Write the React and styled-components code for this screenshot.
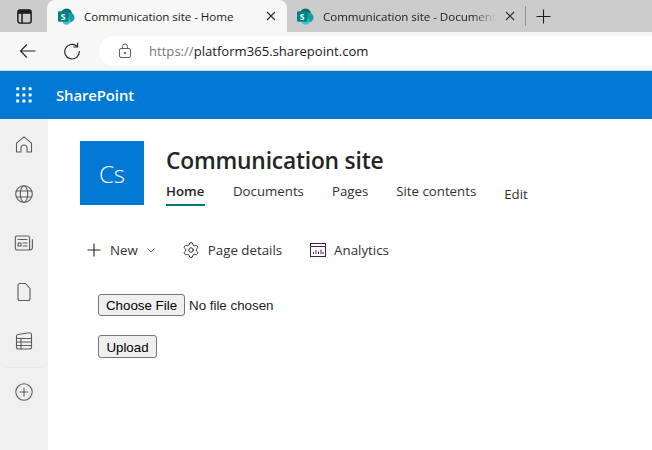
import React from "react";
import styled, { createGlobalStyle } from "styled-components";
import { Settings } from "lucide-react";

const Global = createGlobalStyle`
  html, body { margin: 0; padding: 0; background: #fff; }
  body { font-family: "Open Sans", "Noto Sans", "Liberation Sans", sans-serif; color: #242424; }
`;
const Page = styled.div`
  width: 652px; height: 450px; overflow: hidden; display: flex; flex-direction: column; background: #fff;
`;
const TabStrip = styled.div`
  height: 32px; flex: none; background: #cccccc; display: flex; align-items: stretch;
`;
const WindowBtn = styled.div`
  width: 47px; flex: none; display: flex; align-items: center; justify-content: center; padding-left: 2px; box-sizing: border-box;
`;
const Tab = styled.div`
  width: ${p => p.$w}px; flex: none; box-sizing: border-box; display: flex; align-items: center;
  padding: ${p => p.$pad}; gap: ${p => p.$gap}px;
  background: ${p => (p.$active ? "#f7f7f7" : "transparent")};
  border-radius: 8px 8px 0 0;
`;
const TabTitle = styled.span`
  flex: 1; min-width: 0; white-space: nowrap; overflow: hidden; font-size: 11.6px; letter-spacing: -0.05px; color: #1c1c1c;
  ${p => p.$fade && "-webkit-mask-image: linear-gradient(to right, #000 86%, transparent 100%);"}
`;
const Divider = styled.div`
  width: 1px; height: 20px; background: #8f8f8f; align-self: center; flex: none; margin: 0 10px 0 1px;
`;
const Toolbar = styled.div`
  height: 39px; flex: none; background: #f7f7f7; display: flex; align-items: center; padding-left: 19px; box-sizing: border-box; border-bottom: 1px solid #dcdcdc;
`;
const ToolIcon = styled.div`
  width: 18px; height: 18px; flex: none; margin-right: ${p => p.$mr}px; display: flex;
`;
const Address = styled.div`
  flex: 1; height: 30px; background: #fff; border-radius: 15px 0 0 15px; display: flex; align-items: center; padding-left: 19px; gap: 17px;
`;
const Url = styled.span`
  font-size: 13.1px; color: #1a1a1a; white-space: nowrap;
  & > i { font-style: normal; color: #767676; }
`;
const SuiteBar = styled.div`
  height: 48px; flex: none; background: #0078d4; display: flex; align-items: center; padding-left: 16px; gap: 24px; color: #fff;
`;
const Brand = styled.span`
  font-size: 14.9px; font-weight: 600; letter-spacing: -0.1px;
`;
const Body = styled.div`
  flex: 1; display: flex; min-height: 0;
`;
const Rail = styled.div`
  width: 48px; flex: none; background: #f0f0f0; display: flex; flex-direction: column; align-items: center; padding-top: 16px; box-sizing: border-box;
`;
const RailIcon = styled.div`
  width: 20px; height: 20px; display: flex; margin-bottom: 29px; color: #5c5c5c;
`;
const RailSep = styled.div`
  width: 38px; height: 1px; background: #e8e8e8; margin: -13px 0 14px;
`;
const Main = styled.div`
  flex: 1; min-width: 0; padding: 22px 0 0 32px;
`;
const SiteHeader = styled.div`
  display: flex; gap: 22px;
`;
const Logo = styled.div`
  width: 64px; height: 64px; background: #0078d4; color: #fff; display: flex; align-items: center; justify-content: center; font-size: 24px; font-weight: 300;
`;
const SiteInfo = styled.div`
  display: flex; flex-direction: column; padding-top: 5px;
`;
const Title = styled.div`
  font-size: 22.8px; font-weight: 600; line-height: 30px; letter-spacing: -0.2px; color: #242424;
`;
const Nav = styled.div`
  display: flex; gap: 28px; margin-top: 7px; align-items: flex-start;
`;
const NavItem = styled.div`
  font-size: 13.25px; line-height: 17px; padding-bottom: 4px; white-space: nowrap; color: #323130;
  font-weight: ${p => (p.$active ? 600 : 400)};
  ${p => p.$active && "color:#242424; width: 39px; border-bottom: 2px solid #03787c;"}
  ${p => p.$edit && "margin-top: 3px;"}
`;
const CommandBar = styled.div`
  display: flex; align-items: center; margin-top: 33px; padding-left: 6px; height: 20px;
`;
const Cmd = styled.div`
  display: flex; align-items: center; gap: ${p => p.$gap || 8}px; margin-right: ${p => p.$mr}px; font-size: 13.3px; color: #323130; white-space: nowrap;
`;
const Form = styled.div`
  padding: 34px 0 0 18px; display: flex; flex-direction: column; align-items: flex-start; gap: 19px;
`;
const FileInput = styled.input`
  font-family: "Liberation Sans", Arial, sans-serif; font-size: 13.33px; color: #222; height: 22px; width: 200px;
  &::file-selector-button { font: inherit; height: 22px; width: 87px; padding: 0; margin-right: 4px; border: 1px solid #767676; border-radius: 3px; background: #efefef; color: #000; }
`;
const Upload = styled.button`
  font-family: "Liberation Sans", Arial, sans-serif; font-size: 13.33px; height: 23px; width: 59px; padding: 1px 0 0; border: 1px solid #767676; border-radius: 3px; background: #efefef; color: #000;
`;

const Svg = ({ size = 20, children, sw = 1, stroke = "currentColor" }) => (
  <svg width={size} height={size} viewBox="0 0 20 20" fill="none" stroke={stroke} strokeWidth={sw} strokeLinecap="round" strokeLinejoin="round">{children}</svg>
);

const SpLogo = () => (
  <svg width="17" height="17" viewBox="0 0 17 17" style={{ flex: "none" }}>
    <circle cx="8.5" cy="6" r="5.5" fill="#036c70" />
    <circle cx="11.5" cy="9.5" r="5" fill="#1a9ba1" />
    <circle cx="8.5" cy="13" r="3.8" fill="#37c6d0" />
    <rect x="0" y="3.2" width="10.5" height="10.5" rx="1" fill="#038387" />
    <text x="5.2" y="11.6" textAnchor="middle" fontSize="8.5" fontWeight="700" fill="#fff" fontFamily="Open Sans, sans-serif">S</text>
  </svg>
);
const Close = () => (
  <svg width="10" height="10" viewBox="0 0 10 10" stroke="#2b2b2b" strokeWidth="1.1" style={{ flex: "none" }}>
    <path d="M1 1l8 8M9 1l-8 8" />
  </svg>
);

export default function App() {
  return (
    <Page>
      <Global />
      <TabStrip>
        <WindowBtn>
          <svg width="15" height="15" viewBox="0 0 15 15" fill="none" stroke="#111" strokeWidth="1.4">
            <rect x="0.9" y="0.9" width="13.2" height="13.2" rx="2" />
            <path d="M1 4h13M5 4v10" />
            <path d="M1.5 2.4h12" strokeWidth="2.2" />
          </svg>
        </WindowBtn>
        <Tab $active $w={240} $pad="0 11px 0 11px" $gap={9}>
          <SpLogo />
          <TabTitle>Communication site - Home</TabTitle>
          <Close />
        </Tab>
        <Tab $w={237} $pad="0 9px 0 10px" $gap={9}>
          <SpLogo />
          <TabTitle $fade>Communication site - Documents</TabTitle>
          <Close />
        </Tab>
        <Divider />
        <svg width="15" height="15" viewBox="0 0 15 15" stroke="#1f1f1f" strokeWidth="1.1" style={{ alignSelf: "center" }}>
          <path d="M7.5 0.5v14M0.5 7.5h14" />
        </svg>
      </TabStrip>
      <Toolbar>
        <ToolIcon $mr={26}>
          <svg width="18" height="18" viewBox="0 0 18 18" fill="none" stroke="#222" strokeWidth="1.1">
            <path d="M1.5 9h15M7.8 2.5L1.5 9l6.3 6.5" />
          </svg>
        </ToolIcon>
        <ToolIcon $mr={18}>
          <svg width="18" height="18" viewBox="0 0 18 18" fill="none" stroke="#222" strokeWidth="1.1">
            <path d="M14.2 4.5A7.3 7.3 0 1 0 16.3 9" />
            <path d="M14.6 0.8v4.2h-4.2" />
          </svg>
        </ToolIcon>
        <Address>
          <svg width="14" height="16" viewBox="0 0 14 16" fill="none" stroke="#5f5f5f" strokeWidth="1" style={{ flex: "none" }}>
            <rect x="1.5" y="5.5" width="11" height="9" rx="1.5" />
            <path d="M4.5 5.5V3.5a2.5 2.5 0 0 1 5 0v2" />
            <circle cx="7" cy="10" r="0.8" fill="#5f5f5f" />
          </svg>
          <Url><i>https://</i>platform365.sharepoint.com</Url>
        </Address>
      </Toolbar>
      <SuiteBar>
        <svg width="16" height="16" viewBox="0 0 16 16" fill="#fff">
          {[0, 1, 2].flatMap(r => [0, 1, 2].map(c => <rect key={`${r}${c}`} x={c * 6.2 + 0.2} y={r * 6.2 + 0.2} width="3" height="3" rx="0.6" />))}
        </svg>
        <Brand>SharePoint</Brand>
      </SuiteBar>
      <Body>
        <Rail>
          <RailIcon><Svg sw={1.1}><path d="M2.5 17V8.2L10 1.8l7.5 6.4V17H13v-4a3 3 0 0 0-6 0v4z" /></Svg></RailIcon>
          <RailIcon><Svg sw={1.1}><circle cx="10" cy="10" r="8.3" /><ellipse cx="10" cy="10" rx="3.7" ry="8.3" /><path d="M2.3 7h15.4M2.3 13h15.4" /></Svg></RailIcon>
          <RailIcon><Svg sw={1.1}><path d="M15.5 17H3a1.7 1.7 0 0 1-1.7-1.7V4.7A1.7 1.7 0 0 1 3 3h11a1.7 1.7 0 0 1 1.6 1.7V17h.4a2.4 2.4 0 0 0 2.4-2.4V6.5" /><path d="M4 6.5h9M9 10h4M9 13h4" /><rect x="4" y="10" width="3" height="3" /></Svg></RailIcon>
          <RailIcon><Svg sw={1.1}><path d="M4 3.5A2 2 0 0 1 6 1.5h5.5L16 6.5v10a2 2 0 0 1-2 2H6a2 2 0 0 1-2-2z" /></Svg></RailIcon>
          <RailIcon><Svg sw={1.1}><path d="M2.5 5.5a2 2 0 0 1 1.5-2L15 1.8a2 2 0 0 1 2.5 2V16a2 2 0 0 1-2 2h-11a2 2 0 0 1-2-2z" /><path d="M2.5 7.5h15M2.5 11h15M2.5 14.5h15M7 7.5V18" /></Svg></RailIcon>
          <RailSep />
          <RailIcon><Svg sw={1.1}><circle cx="10" cy="10" r="8.2" /><path d="M10 6v8M6 10h8" /></Svg></RailIcon>
        </Rail>
        <Main>
          <SiteHeader>
            <Logo>Cs</Logo>
            <SiteInfo>
              <Title>Communication site</Title>
              <Nav>
                <NavItem $active>Home</NavItem>
                <NavItem>Documents</NavItem>
                <NavItem>Pages</NavItem>
                <NavItem>Site contents</NavItem>
                <NavItem $edit>Edit</NavItem>
              </Nav>
            </SiteInfo>
          </SiteHeader>
          <CommandBar>
            <Cmd $mr={26} $gap={8}>
              <svg width="16" height="16" viewBox="0 0 16 16" stroke="#242424" strokeWidth="1.1"><path d="M8 1.5v13M1.5 8h13" /></svg>
              New
              <svg width="10" height="10" viewBox="0 0 10 10" fill="none" stroke="#605e5c" strokeWidth="0.9"><path d="M1.5 3.5L5 7l3.5-3.5" /></svg>
            </Cmd>
            <Cmd $mr={28}>
              <Settings size={18} strokeWidth={1.3} color="#242424" />
              Page details
            </Cmd>
            <Cmd $mr={0}>
              <svg width="16" height="14" viewBox="0 0 16 14" fill="none" stroke="#4b1f4e" strokeWidth="1">
                <rect x="0.5" y="0.5" width="15" height="13" />
                <path d="M0.5 3.5h15" />
                <path d="M3.5 11V9M6 11V7M8.5 11V8.5M11 11V6.5M13 11V9" />
              </svg>
              Analytics
            </Cmd>
          </CommandBar>
          <Form>
            <FileInput type="file" />
            <Upload>Upload</Upload>
          </Form>
        </Main>
      </Body>
    </Page>
  );
}
